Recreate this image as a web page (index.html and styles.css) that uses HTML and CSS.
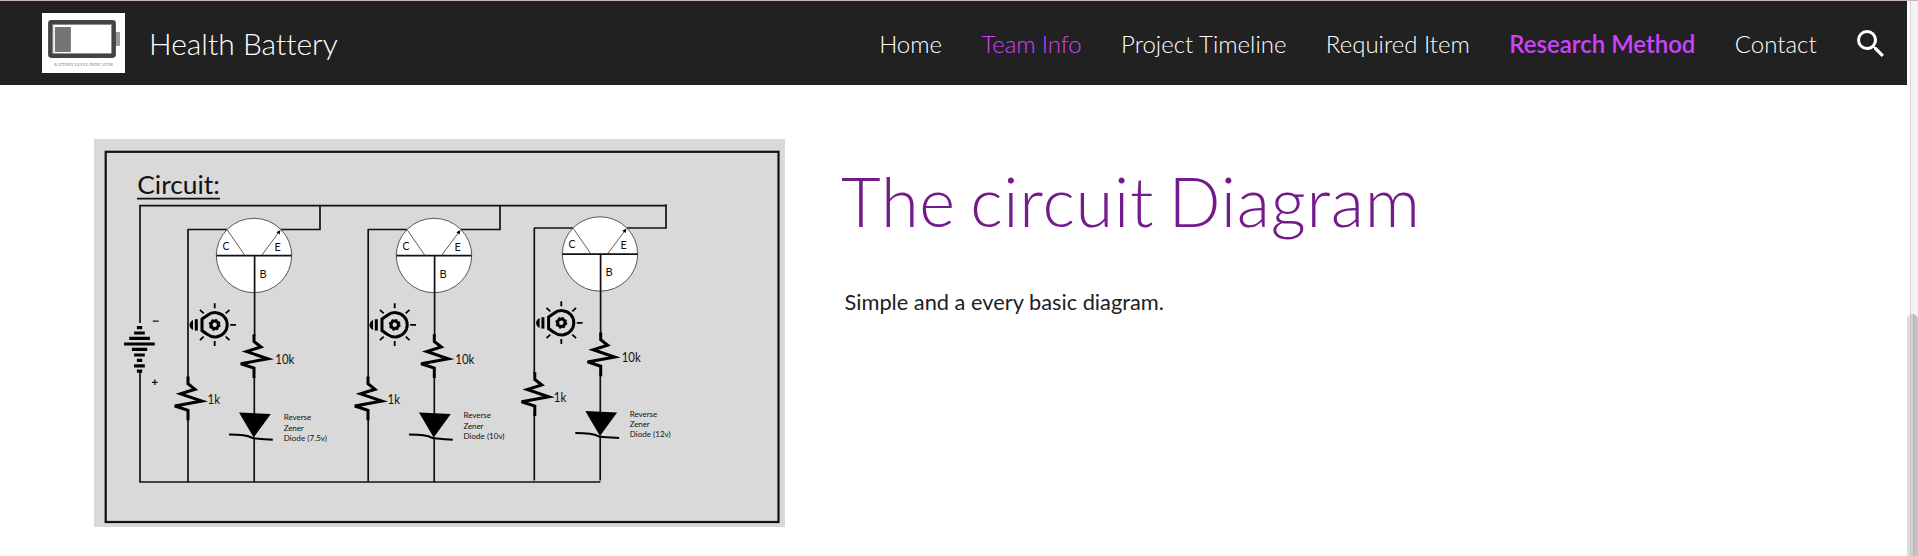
FILE: index.html
```html
<!DOCTYPE html>
<html lang="en">
<head>
<meta charset="utf-8">
<title>Health Battery</title>
<link rel="stylesheet" href="styles.css">
</head>
<body>
<div class="window">
  <div class="page">
    <header class="topbar">
      <a class="brand">
        <svg class="logo" viewBox="0 0 83 60">
          <rect width="83" height="60" fill="#fff"/>
          <rect x="73" y="19" width="5" height="14" rx="1" fill="#9a9a9a"/>
          <rect x="8.4" y="9.4" width="63.2" height="33.2" rx="1" fill="#fff" stroke="#444" stroke-width="4.6"/>
          <rect x="11" y="11.5" width="58.5" height="29" fill="none" stroke="#999" stroke-width=".7"/>
          <rect x="12.9" y="14" width="16" height="25" fill="#747474"/>
          <text x="12" y="53" class="logo-text" textLength="59" lengthAdjust="spacingAndGlyphs">BATTERY LEVEL INDICATOR</text>
        </svg>
        <span class="brand-name">Health Battery</span>
      </a>
      <nav class="nav">
        <a class="link">Home</a>
        <a class="link accent">Team Info</a>
        <a class="link">Project Timeline</a>
        <a class="link">Required Item</a>
        <a class="link current">Research Method</a>
        <a class="link">Contact</a>
        <svg class="search" viewBox="3 3 17.5 17.5"><path fill="#fff" d="M15.5 14h-.79l-.28-.27A6.47 6.47 0 0 0 16 9.5 6.5 6.5 0 1 0 9.5 16c1.61 0 3.09-.59 4.23-1.57l.27.28v.79l5 4.99L20.49 19l-4.99-5zm-6 0C7.01 14 5 11.99 5 9.5S7.01 5 9.5 5 14 7.01 14 9.5 11.99 14 9.5 14z"/></svg>
      </nav>
    </header>
    <main class="content">
      <svg class="diagram" viewBox="94 139 691 388">
        <defs>
          <g id="transistor">
            <path class="wire" d="M227 229.5H188M280 229.5H320V205.7"/>
            <ellipse cx="254" cy="255.5" rx="37.7" ry="37.2" fill="#fff" stroke="#333" stroke-width=".8"/>
            <path class="wire" d="M216.4 255.7H291.6M254.6 255.7V336M254.3 376V414M254.2 438V482"/>
            <path class="thin" d="M227.3 230L245 255.5M261.5 255.5L279 232"/>
            <path d="M280.5 230L279.6 234.6L276.3 232.2Z"/>
            <text class="pin" x="222.4" y="249.5" textLength="7" lengthAdjust="spacingAndGlyphs">C</text>
            <text class="pin" x="274.4" y="250.5" textLength="6.3" lengthAdjust="spacingAndGlyphs">E</text>
            <text class="pin" x="259.6" y="277.5" textLength="7.2" lengthAdjust="spacingAndGlyphs">B</text>
          </g>
          <g id="bulb">
            <path class="heavy" d="M202 319L207.5 315.2A12.2 12.2 0 1 1 207.5 334.4L202 330.6Z"/>
            <path class="heavy" d="M196.3 319.2V330.6"/>
            <path d="M193 320V330Q189.5 328 189.5 325T193 320Z"/>
            <circle class="heavy" cx="214.7" cy="324.8" r="3.7"/>
            <circle cx="214.7" cy="324.8" r="5.2" fill="none" stroke="#000" stroke-width="1.5" stroke-dasharray="2.04 2.04"/>
            <path class="ray" d="M214.7 303.2v5M214.7 341v5M230.2 324.8h5.8M199.9 309.9l3.8 3.4M229.5 309.9l-3.8 3.4M199.9 340.1l3.8-3.4M229.5 340.1l-3.8-3.4"/>
          </g>
          <path id="resistor" class="heavy" d="M254 334.3V341.5L261 347L246.5 351.5L268 358.8L240.8 363.7L254 368V378"/>
          <g id="diode">
            <path d="M239 412.5L270.8 414L253.7 437.5Z"/>
            <path class="curve" d="M229 434.6C240 434.6 248 435.5 252 437.8C256 439 265 439 272.8 439.7"/>
          </g>
        </defs>
        <rect x="94" y="139" width="691" height="388" fill="#d9d9d9"/>
        <rect x="105.7" y="151.8" width="672.8" height="370.2" fill="none" stroke="#111" stroke-width="2.2"/>
        <text class="title" x="137.3" y="194.4" textLength="82.5" lengthAdjust="spacingAndGlyphs">Circuit:</text>
        <path class="wire" d="M137 198.6H220"/>
        <path class="wire" d="M140 323V205.7H666M140 372V482H600.3"/>
        <path class="cells" d="M136.9 327.7h5.3M134.1 333h10.7M129.2 338.3h20.7M124.1 344h30.7M131.9 349.4h15.3M134.1 355h10.7M136.9 360.4h5.3M134.1 365.8h10.7M136.9 371.2h5.3"/>
        <path class="sign" d="M152.7 321.2h6M152 382.3h5.6M154.8 379.5v5.6"/>

        <path class="wire" d="M188 229V378M188 418V482"/>
        <use href="#transistor"/>
        <use href="#bulb"/>
        <use href="#resistor"/>
        <use href="#resistor" x="-66" y="42.3"/>
        <use href="#diode"/>
        <text class="value" x="275.3" y="363.5" textLength="19" lengthAdjust="spacingAndGlyphs">10k</text>
        <text class="value" x="207.6" y="403.5" textLength="12.5" lengthAdjust="spacingAndGlyphs">1k</text>
        <text class="note" x="283.7" y="420" textLength="27.5">Reverse</text>
        <text class="note" x="283.7" y="430.5" textLength="20">Zener</text>
        <text class="note" x="283.7" y="441" textLength="43.3">Diode (7.5v)</text>

        <path class="wire" d="M368.2 229V378M368.2 418V482"/>
        <use href="#transistor" x="180"/>
        <use href="#bulb" x="180"/>
        <use href="#resistor" x="180.3"/>
        <use href="#resistor" x="114" y="42.3"/>
        <use href="#diode" x="180"/>
        <text class="value" x="455.3" y="363.5" textLength="19" lengthAdjust="spacingAndGlyphs">10k</text>
        <text class="value" x="387.6" y="403.5" textLength="12.5" lengthAdjust="spacingAndGlyphs">1k</text>
        <text class="note" x="463.5" y="418" textLength="27.5">Reverse</text>
        <text class="note" x="463.5" y="428.5" textLength="20">Zener</text>
        <text class="note" x="463.5" y="439" textLength="41">Diode (10v)</text>

        <path class="wire" d="M534.3 228V374M534.3 414V480.5"/>
        <use href="#transistor" x="346" y="-1.5"/>
        <use href="#bulb" x="346.6" y="-2"/>
        <use href="#resistor" x="346.7" y="-1.8"/>
        <use href="#resistor" x="280.8" y="38"/>
        <use href="#diode" x="346.3" y="-1.6"/>
        <text class="value" x="621.7" y="361.6" textLength="19" lengthAdjust="spacingAndGlyphs">10k</text>
        <text class="value" x="553.8" y="401.6" textLength="12.5" lengthAdjust="spacingAndGlyphs">1k</text>
        <text class="note" x="629.7" y="416.5" textLength="27.5">Reverse</text>
        <text class="note" x="629.7" y="427" textLength="20">Zener</text>
        <text class="note" x="629.7" y="437.3" textLength="41">Diode (12v)</text>
      </svg>
      <section class="copy">
        <h1 class="heading">The circuit Diagram</h1>
        <p class="body">Simple and a every basic diagram.</p>
      </section>
    </main>
  </div>
  <div class="scroll"><div class="thumb"></div></div>
</div>
</body>
</html>
```
FILE: styles.css
```css
* { box-sizing: border-box; }
body {
  margin: 0;
  background: #fff;
  font-family: Lato, "Open Sans", sans-serif;
  font-variant-ligatures: none;
  overflow: hidden;
}
.window {
  display: flex;
  height: 556px;
  border-top: 1px solid #cbb4bd;
}
.page { width: 1907px; flex: none; }
.topbar {
  display: flex;
  align-items: center;
  justify-content: space-between;
  height: 84px;
  padding: 0 23px 0 42px;
  background: #212121;
  color: #fff;
}
.brand { display: flex; align-items: center; gap: 24px; }
.logo { width: 83px; height: 60px; }
.logo-text { font: 4.8px "Liberation Serif", serif; fill: #777; }
.brand-name { font-size: 30px; font-weight: 300; line-height: 40px; padding-bottom: 1px; }
.nav { display: flex; align-items: center; gap: 39.4px; }
.link { font-size: 24px; font-weight: 300; line-height: 36px; padding-top: 2px; white-space: nowrap; }
.accent { color: #d041ff; letter-spacing: -.1px; }
.current { color: #d041ff; font-weight: 600; }
.search { width: 27px; height: 27px; margin-left: 1px; }
.content { display: flex; padding: 54px 0 0 94px; gap: 56px; }
.diagram { width: 691px; height: 388px; flex: none; }
.copy { padding-top: 22px; }
.heading {
  margin: 0;
  font-size: 68.6px;
  font-weight: 300;
  line-height: 80px;
  letter-spacing: .75px;
  word-spacing: -5px;
  color: #741b8c;
  white-space: nowrap;
}
.body { margin: 45px 0 0 3.5px; font-size: 21.8px; line-height: 32px; color: #212121; }
.scroll {
  width: 11px;
  display: flex;
  align-items: flex-end;
  background: linear-gradient(90deg, #fff 3px, #cfcfcf 3px, #dedede 4px, #f3f3f3 4px);
}
.thumb {
  width: 11px;
  height: 242px;
  border-radius: 5px 5px 0 0;
  background: linear-gradient(90deg, #dedede 3px, #c8c8c8 3px, #c8c8c8 4px, #d4d4d4 4px, #d4d4d4 6px, #b2b2b2 6px, #b2b2b2 7px, #c2c2c2 7px);
}
.wire { fill: none; stroke: #111; stroke-width: 1.7; }
.thin { fill: none; stroke: #333; stroke-width: .8; }
.heavy { fill: none; stroke: #000; stroke-width: 3; }
.ray { fill: none; stroke: #000; stroke-width: 1.8; }
.curve { fill: none; stroke: #000; stroke-width: 2; }
.cells { fill: none; stroke: #000; stroke-width: 3.2; }
.sign { fill: none; stroke: #111; stroke-width: 1.3; }
.title { font-size: 25.5px; fill: #111; }
.pin { font-size: 12px; fill: #111; }
.value { font-size: 12.5px; fill: #111; }
.note { font-size: 8px; fill: #111; }
```
